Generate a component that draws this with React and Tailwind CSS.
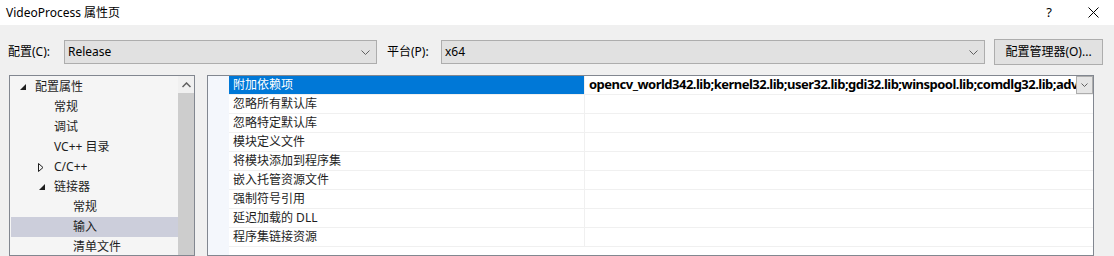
import React, { useLayoutEffect, useState } from "react";

const font = { fontFamily: '"Noto Sans", "Noto Sans CJK SC", sans-serif' };

const VALUE_HEAD = "opencv_world342.lib;kernel32.lib;user32.lib;gdi32.lib;winspool.lib;comdlg32.lib;";
const VALUE = VALUE_HEAD + "adv";

function Chevron() {
  return (
    <svg width="9" height="5" viewBox="0 0 9 5">
      <path d="M0.5 0.5 L4.5 4.5 L8.5 0.5" fill="none" stroke="#606060" strokeWidth="1" />
    </svg>
  );
}

function Combo({ width, text }) {
  return (
    <div
      className={`h-[24px] shrink-0 border border-[#adadad] bg-[#e1e1e1] flex items-center justify-between pl-[3px] pr-[6px] ${width}`}
    >
      <span className="text-[12px] text-black leading-none">{text}</span>
      <Chevron />
    </div>
  );
}

function ExpandedTri() {
  return (
    <svg width="6" height="6" viewBox="0 0 6 6">
      <path d="M6 0 L6 6 L0 6 Z" fill="#1e1e1e" />
    </svg>
  );
}

function CollapsedTri() {
  return (
    <svg width="6" height="9" viewBox="0 0 6 9">
      <path d="M0.5 0.5 L5 4.5 L0.5 8.5 Z" fill="none" stroke="#1e1e1e" strokeWidth="1" />
    </svg>
  );
}

const treeItems = [
  { text: "配置属性", tri: "open", tx: 35, ix: 20 },
  { text: "常规", tx: 54 },
  { text: "调试", tx: 54 },
  { text: "VC++ 目录", tx: 54 },
  { text: "C/C++", tri: "closed", tx: 54, ix: 38 },
  { text: "链接器", tri: "open", tx: 54, ix: 39 },
  { text: "常规", tx: 73 },
  { text: "输入", tx: 73, sel: true },
  { text: "清单文件", tx: 73 },
];

const props = [
  "附加依赖项",
  "忽略所有默认库",
  "忽略特定默认库",
  "模块定义文件",
  "将模块添加到程序集",
  "嵌入托管资源文件",
  "强制符号引用",
  "延迟加载的 DLL",
  "程序集链接资源",
];

export default function App() {
  const [ls, setLs] = useState(0);
  useLayoutEffect(() => {
    try {
      const c = document.createElement("canvas").getContext("2d");
      c.font = 'bold 13px "Noto Sans"';
      const w = c.measureText(VALUE_HEAD).width;
      setLs((467 - w) / VALUE_HEAD.length);
    } catch (e) {}
  }, []);

  return (
    <div className="w-[1114px] h-[256px] overflow-hidden bg-[#f0f0f0] flex flex-col text-[#1e1e1e]" style={font}>
      {/* title bar */}
      <div className="h-[25px] bg-white flex items-center shrink-0">
        <span className="ml-[6px] text-[12px] text-black">VideoProcess 属性页</span>
        <span className="ml-auto text-[13px] text-black mr-[36px]">?</span>
        <svg width="11" height="11" viewBox="0 0 11 11" className="mr-[15px]">
          <path d="M0.5 0.5 L10.5 10.5 M10.5 0.5 L0.5 10.5" stroke="#000" strokeWidth="1" />
        </svg>
      </div>

      {/* config row */}
      <div className="flex items-center h-[26px] mt-[14px] shrink-0">
        <span className="ml-[8px] w-[56px] shrink-0 text-[12px] text-black">配置(C):</span>
        <Combo width="w-[313px]" text="Release" />
        <span className="ml-[10px] w-[54px] shrink-0 text-[12px] text-black">平台(P):</span>
        <Combo width="w-[544px]" text="x64" />
        <div className="ml-[9px] w-[109px] shrink-0 h-[26px] border border-[#adadad] bg-[#e1e1e1] flex items-center justify-center text-[12px] text-black">
          配置管理器(O)...
        </div>
      </div>

      {/* main */}
      <div className="flex mt-[10px] flex-1 min-h-0">
        {/* tree */}
        <div className="ml-[9px] w-[186px] shrink-0 border border-[#828790] bg-[#f5f5f5] flex">
          <div className="flex-1 pt-[1px] pl-[1px]">
            {treeItems.map((it, i) => (
              <div
                key={i}
                className={`relative h-[20px] flex items-center text-[12px] ${it.sel ? "bg-[#cccedb]" : ""}`}
              >
                {it.tri && (
                  <span className="absolute flex items-center" style={{ left: it.ix - 11 }}>
                    {it.tri === "open" ? <ExpandedTri /> : <CollapsedTri />}
                  </span>
                )}
                <span className="absolute whitespace-nowrap" style={{ left: it.tx - 11 }}>
                  {it.text}
                </span>
              </div>
            ))}
          </div>
          <div className="w-[16px] shrink-0 bg-[#f0f0f0] flex flex-col">
            <div className="h-[17px] flex items-center justify-center">
              <svg width="9" height="6" viewBox="0 0 9 6">
                <path d="M0.5 5 L4.5 1 L8.5 5" fill="none" stroke="#606060" strokeWidth="1.5" />
              </svg>
            </div>
            <div className="flex-1 bg-[#cdcdcd]" />
          </div>
        </div>

        {/* property grid */}
        <div className="ml-[12px] w-[887px] shrink-0 border border-[#828790] bg-white flex">
          <div className="w-[21px] shrink-0 bg-[#f4f7fc]" />
          <div className="flex-1 min-w-0 flex flex-col">
            {props.map((p, i) => (
              <div key={i} className="h-[19px] flex border-b border-[#f0f0f0]">
                <div
                  className={`w-[356px] shrink-0 border-r border-[#f0f0f0] flex items-center pl-[4px] text-[12px] ${
                    i === 0 ? "bg-[#0078d7] text-white" : "text-[#1e1e1e]"
                  }`}
                >
                  {p}
                </div>
                <div className="flex-1 flex items-center min-w-0">
                  {i === 0 && (
                    <>
                      <span
                        className="flex-1 min-w-0 overflow-hidden whitespace-nowrap pl-[4px] text-[13px] font-bold text-black"
                        style={{ letterSpacing: ls + "px" }}
                      >
                        {VALUE}
                      </span>
                      <div className="w-[17px] shrink-0 h-[18px] border border-[#adadad] bg-[#e5e5e5] flex items-center justify-center">
                        <svg width="7" height="4" viewBox="0 0 7 4">
                          <path d="M0.5 0.5 L3.5 3.5 L6.5 0.5" fill="none" stroke="#606060" strokeWidth="1" />
                        </svg>
                      </div>
                    </>
                  )}
                </div>
              </div>
            ))}
          </div>
        </div>
      </div>
    </div>
  );
}
